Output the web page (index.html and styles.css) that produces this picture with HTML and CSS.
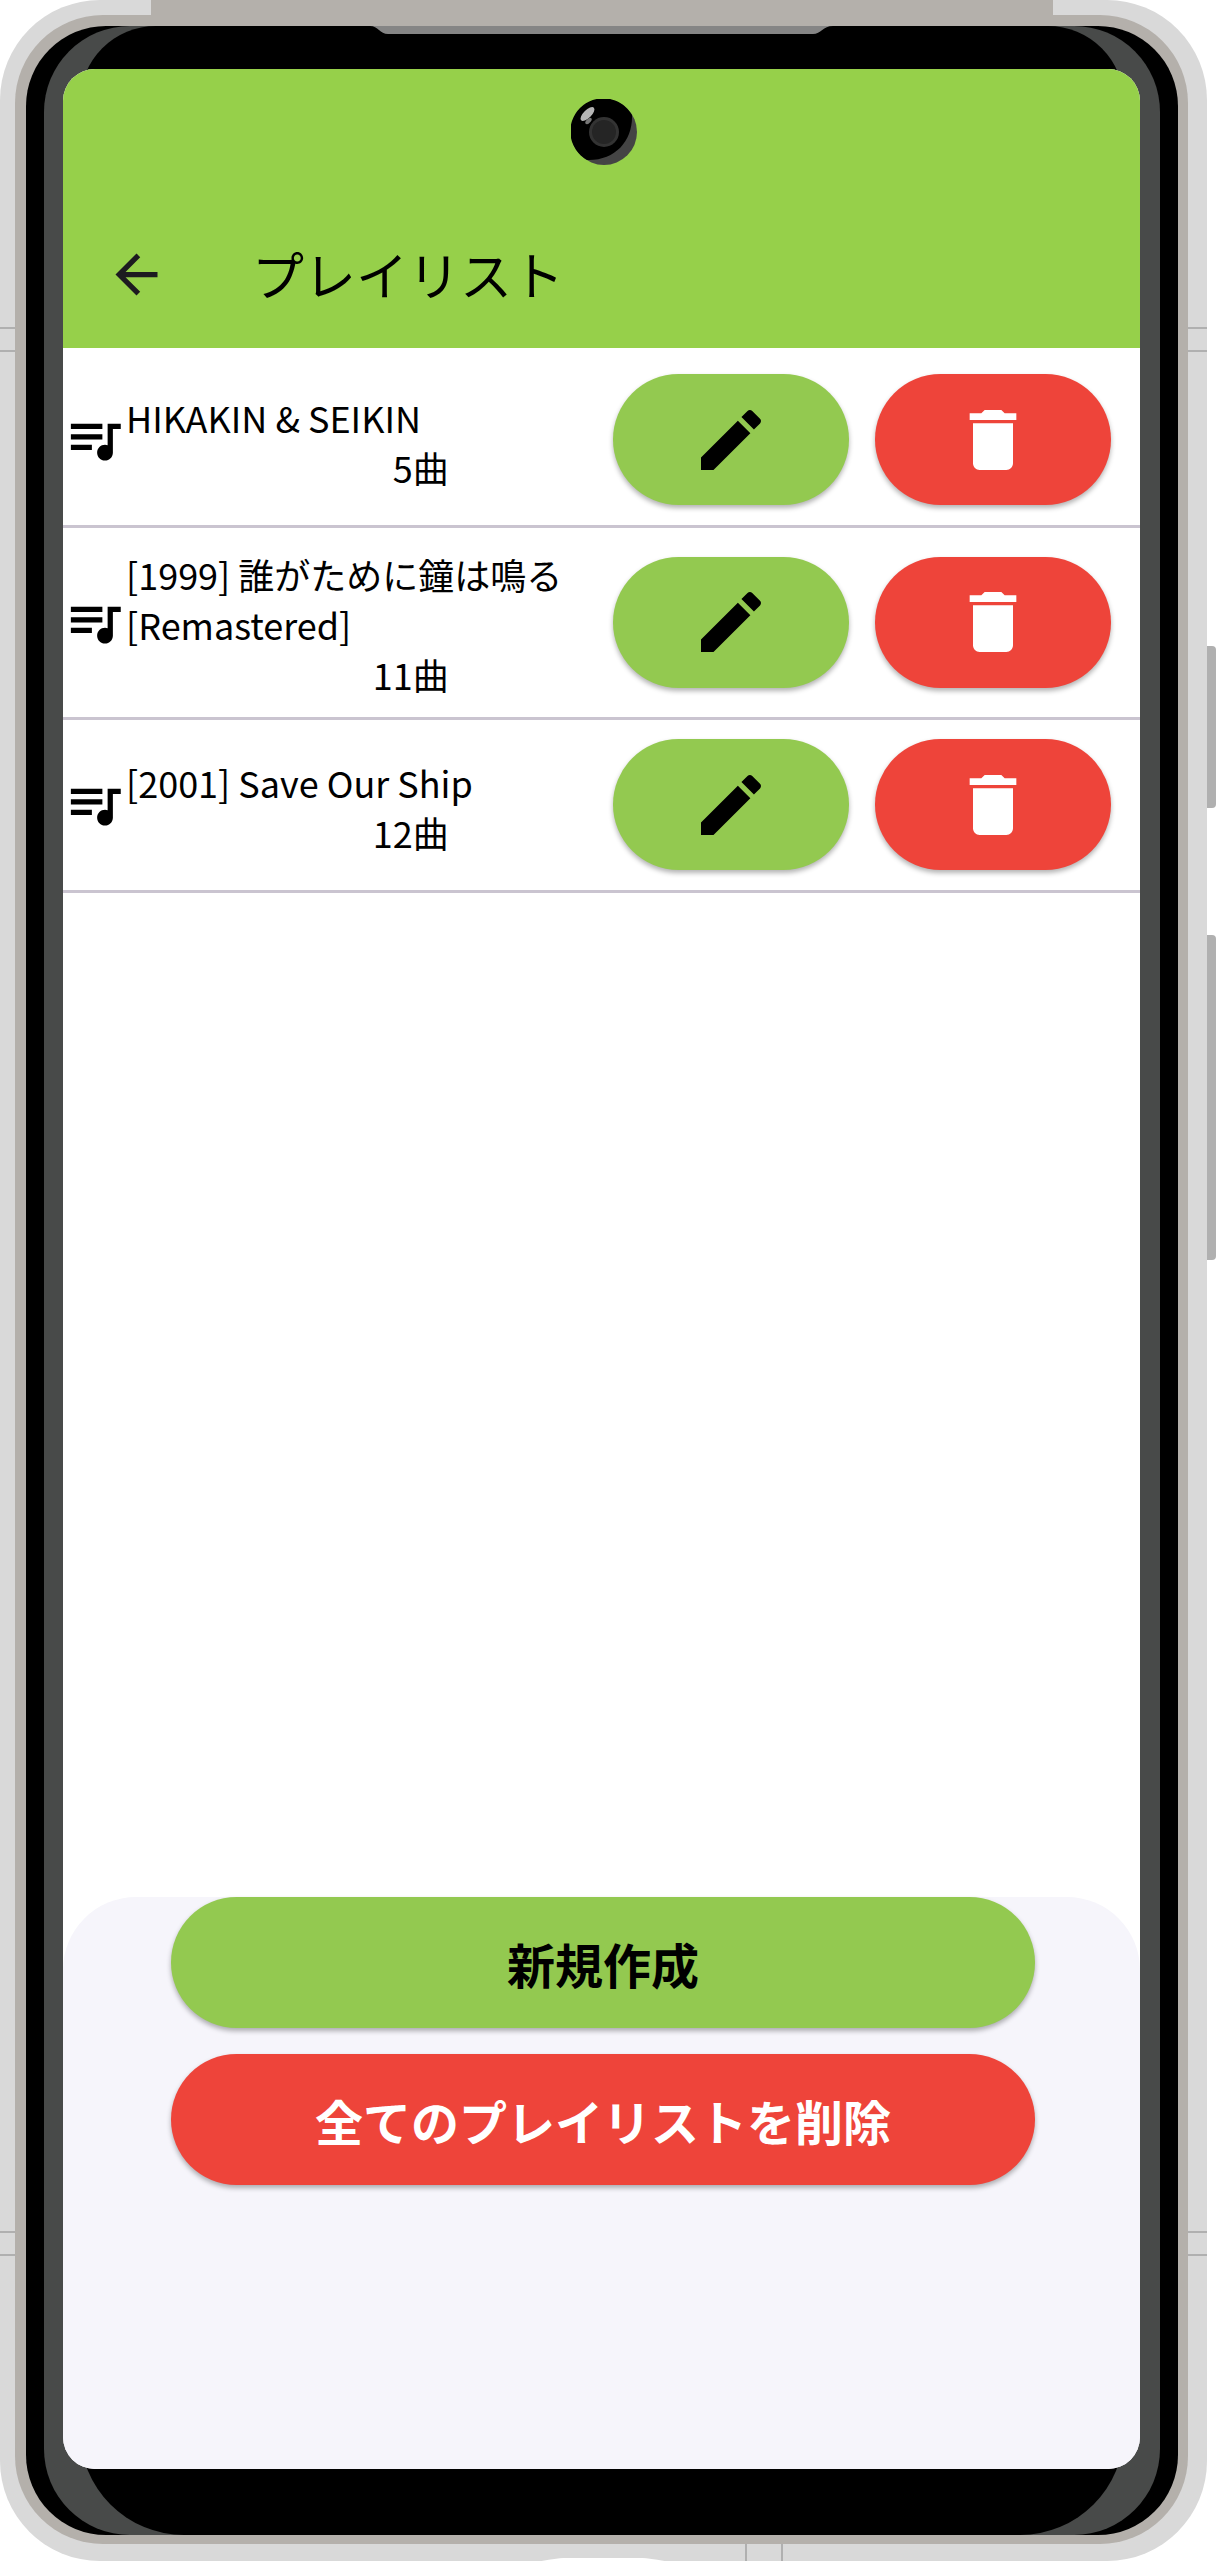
FILE: index.html
```html
<!DOCTYPE html>
<html lang="ja">
<head>
<meta charset="utf-8">
<meta name="viewport" content="width=device-width, initial-scale=1">
<title>プレイリスト</title>
<link rel="stylesheet" href="styles.css">
</head>
<body>
<svg class="symbols" aria-hidden="true">
  <symbol id="back" viewBox="0 0 24 24"><path d="M20 11H7.83l5.59-5.59L12 4l-8 8 8 8 1.41-1.41L7.83 13H20z"/></symbol>
  <symbol id="queue" viewBox="0 0 24 24"><path d="M15 6H3v2h12V6zm0 4H3v2h12v-2zM3 16h8v-2H3v2zM17 6v8.18c-.31-.11-.65-.18-1-.18-1.66 0-3 1.34-3 3s1.34 3 3 3 3-1.34 3-3V8h3V6h-5z"/></symbol>
  <symbol id="edit" viewBox="0 0 24 24"><path d="M3 17.25V21h3.75L17.81 9.94l-3.75-3.75L3 17.25zM20.71 7.04c.39-.39.39-1.02 0-1.41l-2.34-2.34c-.39-.39-1.02-.39-1.41 0l-1.83 1.83 3.75 3.75 1.83-1.83z"/></symbol>
  <symbol id="delete" viewBox="0 0 24 24"><path d="M6 19c0 1.1.9 2 2 2h8c1.1 0 2-.9 2-2V7H6v12zM19 4h-3.5l-1-1h-5l-1 1H5v2h14V4z"/></symbol>
</svg>
<div class="device">
  <span class="top-band"></span>
  <span class="seam seam-left seam-upper"></span>
  <span class="seam seam-right seam-upper"></span>
  <span class="seam seam-left seam-lower"></span>
  <span class="seam seam-right seam-lower"></span>
  <span class="seam-bottom"></span>
  <svg class="port" viewBox="0 0 136 5" aria-hidden="true"><path d="M0 5C14 3 22 1 32 1H104C114 1 122 3 136 5z" fill="#fff"/></svg>
  <span class="side-key key-power"></span>
  <span class="side-key key-volume"></span>
  <div class="rim">
    <div class="bezel">
      <div class="glass">
        <svg class="speaker" viewBox="0 0 463 8" preserveAspectRatio="none" aria-hidden="true"><path d="M0 0C8 0 10 8 18 8H443C451 8 453 0 463 0z" fill="#858585"/></svg>
        <div class="screen">
          <svg class="camera" viewBox="0 0 66 66" aria-hidden="true">
            <circle cx="33" cy="33" r="33" fill="#444"/>
            <path d="M61 16C62 42 44 62 16 61A33 33 0 1 1 61 16z" fill="#000"/>
            <circle cx="33" cy="33" r="15" fill="#333"/>
            <circle cx="33" cy="33" r="12" fill="#252525"/>
            <ellipse cx="16.500" cy="15" rx="9" ry="4" transform="rotate(-45 16.500 15)" fill="#b5b5b5"/>
            <ellipse cx="17.500" cy="22" rx="4" ry="2" transform="rotate(-45 17.500 22)" fill="#777"/>
          </svg>
          <header class="app-bar">
            <button class="back" type="button" aria-label="戻る"><svg><use href="#back"/></svg></button>
            <h1>プレイリスト</h1>
          </header>
          <main>
            <ul class="playlists">
              <li>
                <svg class="queue" aria-hidden="true"><use href="#queue"/></svg>
                <div class="info"><p>HIKAKIN &amp; SEIKIN</p><p class="count">5曲</p></div>
                <div class="actions">
                  <button class="button green" type="button" aria-label="編集"><svg><use href="#edit"/></svg></button>
                  <button class="button red" type="button" aria-label="削除"><svg><use href="#delete"/></svg></button>
                </div>
              </li>
              <li>
                <svg class="queue" aria-hidden="true"><use href="#queue"/></svg>
                <div class="info"><p>[1999] 誰がために鐘は鳴る [Remastered]</p><p class="count">11曲</p></div>
                <div class="actions">
                  <button class="button green" type="button" aria-label="編集"><svg><use href="#edit"/></svg></button>
                  <button class="button red" type="button" aria-label="削除"><svg><use href="#delete"/></svg></button>
                </div>
              </li>
              <li>
                <svg class="queue" aria-hidden="true"><use href="#queue"/></svg>
                <div class="info"><p>[2001] Save Our Ship</p><p class="count">12曲</p></div>
                <div class="actions">
                  <button class="button green" type="button" aria-label="編集"><svg><use href="#edit"/></svg></button>
                  <button class="button red" type="button" aria-label="削除"><svg><use href="#delete"/></svg></button>
                </div>
              </li>
            </ul>
          </main>
          <footer class="sheet">
            <button class="button green" type="button">新規作成</button>
            <button class="button red" type="button">全てのプレイリストを削除</button>
          </footer>
        </div>
      </div>
    </div>
  </div>
</div>
</body>
</html>
```
FILE: styles.css
```css
* { box-sizing: border-box; }

body {
  margin: 0;
  min-height: 100vh;
  display: flex;
  background: #fff;
  color: #000;
  font-family: "Noto Sans CJK JP", sans-serif;
}

h1, p, ul { margin: 0; padding: 0; }
button { border: 0; padding: 0; font: inherit; cursor: pointer; }
svg { fill: currentColor; }
.symbols { display: none; }

/* Phone body, from the outside in */
.device {
  position: relative;
  flex: 1;
  display: flex;
  margin: 0 9px 1px 0;
  padding: 15px 19px 17px 15px;
  border-radius: 100px;
  background: #d9d9d9;
}

.rim {
  position: relative;
  flex: 1;
  display: flex;
  padding: 11px 10px 9px 11px;
  border-radius: 88px;
  background: #b4b0ab;
}

.bezel {
  flex: 1;
  display: flex;
  padding: 0 18px;
  border-radius: 80px;
  background: #000;
}

.glass {
  position: relative;
  flex: 1;
  display: flex;
  padding: 43px 20px 66px 19px;
  border-radius: 86px;
  background: #484a49;
}

/* Darker centre of the glass, visible above and below the screen */
.glass::before {
  content: "";
  position: absolute;
  inset: 0 36px;
  border-radius: 76px 76px 104px 104px;
  background: #000;
}

.top-band {
  position: absolute;
  top: 0;
  left: 151px;
  right: 154px;
  height: 26px;
  background: #b4b0ab;
}

.seam {
  position: absolute;
  height: 25px;
  border: solid #b0b0b0;
  border-width: 2px 0;
}

.seam-left { left: 0; width: 16px; }
.seam-right { right: 0; width: 19px; }
.seam-upper { top: 327px; }
.seam-lower { bottom: 305px; }

.seam-bottom {
  position: absolute;
  bottom: 0;
  left: 745px;
  width: 38px;
  height: 18px;
  border: solid #b0b0b0;
  border-width: 0 2px;
}

.port {
  position: absolute;
  bottom: -1px;
  left: 535px;
  width: 136px;
  height: 5px;
}

.side-key {
  position: absolute;
  left: 100%;
  width: 9px;
  border-radius: 0 4px 4px 0;
  background: #b0b0b0;
}

.key-power { top: 646px; height: 162px; }
.key-volume { top: 935px; height: 325px; }

.speaker {
  position: absolute;
  top: 0;
  left: 326px;
  width: calc(100% - 653px);
  height: 8px;
}

/* App */
.screen {
  position: relative;
  flex: 1;
  display: flex;
  flex-direction: column;
  overflow: hidden;
  border-radius: 32px;
  background: #fff;
}

.camera {
  position: absolute;
  top: 30px;
  left: 50%;
  width: 66px;
  height: 66px;
  margin-left: -31px;
}

.app-bar {
  display: flex;
  align-items: center;
  gap: 84px;
  padding: 172px 42px 41px;
  background: #96d04a;
}

.back {
  width: 63px;
  height: 66px;
  background: none;
  color: #1d1b20;
}

.back svg { display: block; width: 63px; height: 63px; }

h1 {
  font-size: 52px;
  font-weight: 400;
  line-height: 66px;
}

main { flex: 1; }

.playlists { padding-top: 7px; list-style: none; }

.playlists li {
  display: flex;
  align-items: center;
  padding: 19px 29px 20px 0;
  border-bottom: 3px solid #cac4d0;
}

.queue { flex: none; width: 63px; height: 63px; }

.info {
  flex: 1;
  margin: 2px 26px -2px 0;
  font-size: 36px;
  line-height: 50px;
}

.count { width: 70%; text-align: right; }

.actions { display: flex; gap: 26px; }

.button {
  display: flex;
  align-items: center;
  justify-content: center;
  height: 131px;
  border-radius: 66px;
  box-shadow: 0 3px 5px rgba(0, 0, 0, 0.3);
  font-size: 48px;
  font-weight: 700;
}

.actions .button { width: 236px; }
.button svg { width: 80px; height: 80px; }
.green { background: #93c950; color: #000; }
.red { background: #ee443a; color: #fff; }

.sheet {
  display: flex;
  flex-direction: column;
  gap: 26px;
  min-height: 572px;
  padding: 0 105px 26px 108px;
  border-radius: 73px 73px 0 0;
  background: #f6f5fb;
}
```
